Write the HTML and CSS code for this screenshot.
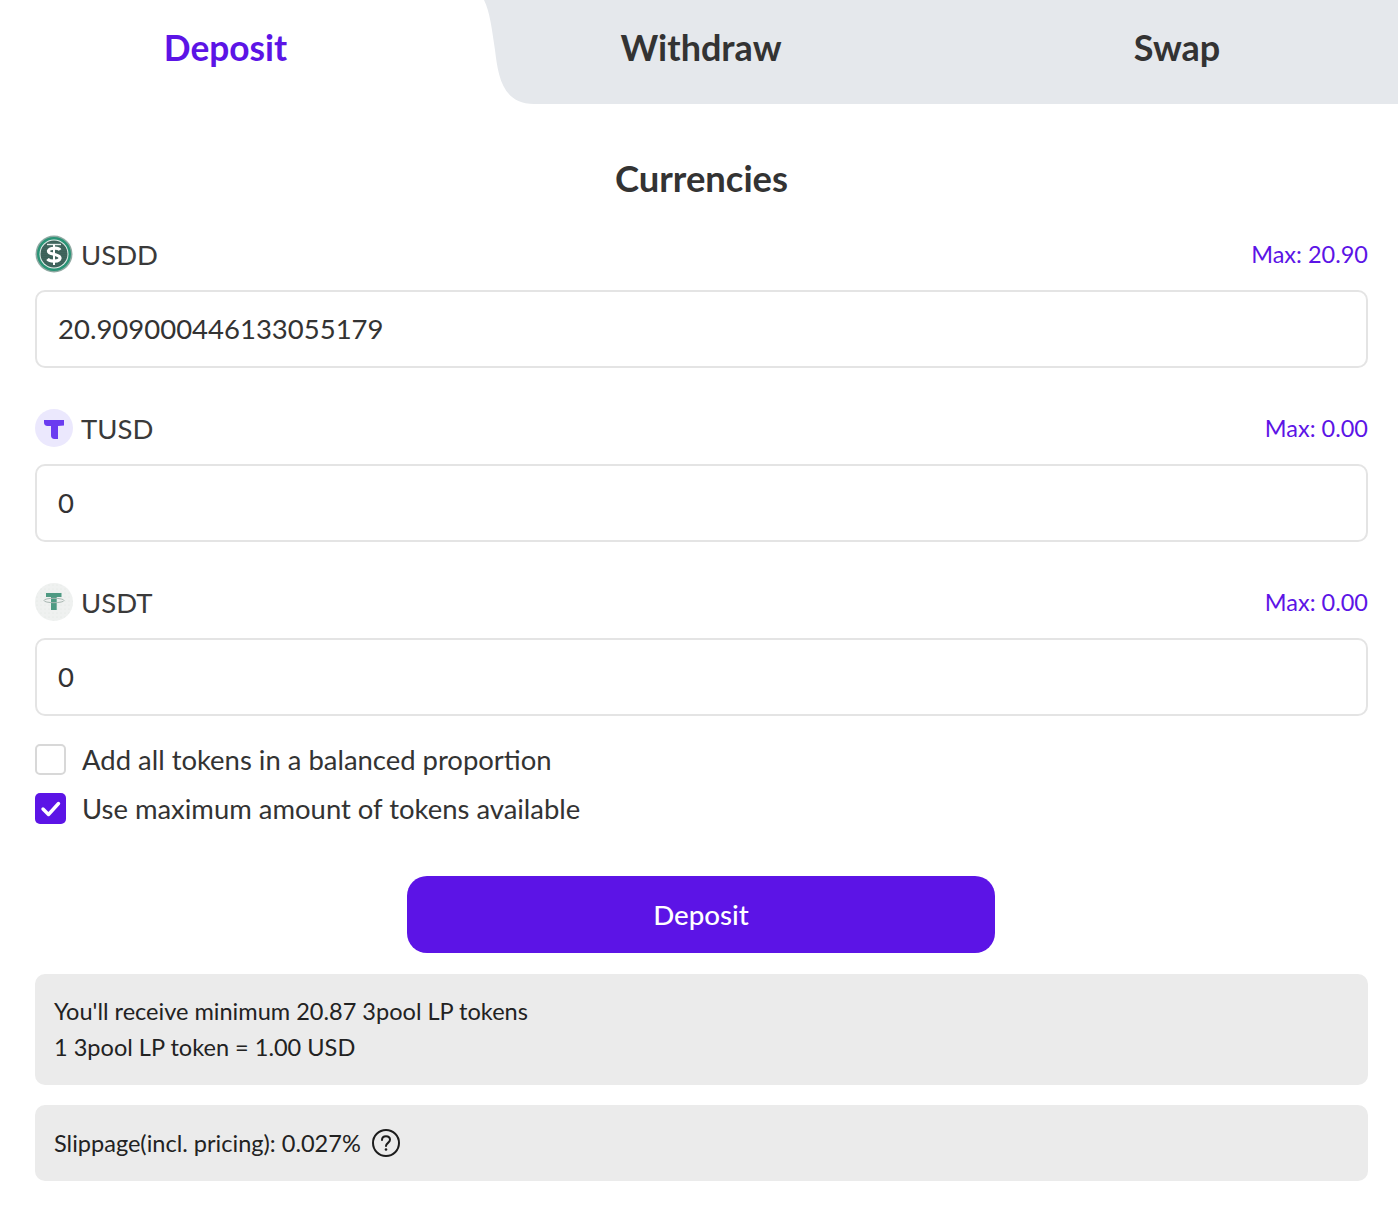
FILE: index.html
```html
<!DOCTYPE html>
<html lang="en">
<head>
<meta charset="utf-8">
<title>Deposit</title>
<link rel="stylesheet" href="styles.css">
</head>
<body>
<nav class="tabs">
  <div class="tab tab-active">Deposit</div>
  <div class="tab-rest">
    <svg class="tab-curve" viewBox="0 0 50 104" preserveAspectRatio="none" aria-hidden="true"><path d="M0 0C6 12 8 30 11 50C14 75 18 104 50 104L50 0Z" fill="#e5e8ec"/></svg>
    <div class="tab tab-withdraw">Withdraw</div>
    <div class="tab tab-swap">Swap</div>
  </div>
</nav>
<main class="content">
  <h2 class="title">Currencies</h2>

  <section class="field">
    <div class="field-head">
      <div class="coin">
        <svg class="coin-icon" viewBox="0 0 38 38" aria-hidden="true">
          <defs>
            <pattern id="usdd-dots" width="2" height="2" patternUnits="userSpaceOnUse">
              <rect width="2" height="2" fill="#33544e"/>
              <circle cx="1" cy="1" r="0.5" fill="#6fa596"/>
            </pattern>
          </defs>
          <circle cx="19" cy="19" r="18.500" fill="#8fa9a2"/>
          <circle cx="19" cy="19" r="17" fill="#2a9476"/>
          <circle cx="19" cy="19" r="14.500" fill="#e6efec"/>
          <circle cx="19" cy="19" r="13.500" fill="url(#usdd-dots)"/>
          <path d="M12 9.500H26" stroke="#e6efec" stroke-width="1.400"/>
          <path d="M25 15C23.500 12.500 14.500 12.500 13.500 15.800C12.500 20 25.500 18.500 25 23.300C24.500 27 15 27 12.500 24" fill="none" stroke="#fff" stroke-width="3.200"/>
          <path d="M19 9.500V30" stroke="#fff" stroke-width="2"/>
        </svg>
        <span class="coin-name">USDD</span>
      </div>
      <span class="max">Max: 20.90</span>
    </div>
    <div class="input">20.909000446133055179</div>
  </section>

  <section class="field">
    <div class="field-head">
      <div class="coin">
        <svg class="coin-icon" viewBox="0 0 38 38" aria-hidden="true">
          <circle cx="19" cy="19" r="19" fill="#ebe8fd"/>
          <path d="M9 11H29V16.500L23 17V30H19.500C17.300 30 16 28.700 16 26.500V17H12.500C10.300 17 9 15.500 9 13.500Z" fill="#6a3cf0"/>
        </svg>
        <span class="coin-name">TUSD</span>
      </div>
      <span class="max">Max: 0.00</span>
    </div>
    <div class="input">0</div>
  </section>

  <section class="field">
    <div class="field-head">
      <div class="coin">
        <svg class="coin-icon" viewBox="0 0 38 38" aria-hidden="true">
          <defs>
            <pattern id="usdt-dots" width="4" height="4" patternUnits="userSpaceOnUse">
              <rect width="4" height="4" fill="#eff1f0"/>
              <circle cx="2" cy="2" r="0.5" fill="#e0e4e2"/>
            </pattern>
          </defs>
          <circle cx="19" cy="19" r="19" fill="url(#usdt-dots)"/>
          <path d="M11 10H26.500V14H21.700V27H16V14H11Z" fill="#4f9a83"/>
          <ellipse cx="19" cy="17.500" rx="10" ry="2.200" fill="none" stroke="#aab8b3" stroke-width="1"/>
        </svg>
        <span class="coin-name">USDT</span>
      </div>
      <span class="max">Max: 0.00</span>
    </div>
    <div class="input">0</div>
  </section>

  <div class="checks">
    <div class="check-row">
      <span class="box"></span>
      <span class="check-label">Add all tokens in a balanced proportion</span>
    </div>
    <div class="check-row">
      <span class="box box-on">
        <svg class="tick" viewBox="0 0 31 31" aria-hidden="true"><path d="M8 16L13.500 21.500L23.500 10.500" fill="none" stroke="#fff" stroke-width="3.400" stroke-linecap="round" stroke-linejoin="round"/></svg>
      </span>
      <span class="check-label">Use maximum amount of tokens available</span>
    </div>
  </div>

  <button class="submit" type="button">Deposit</button>

  <div class="info info-receive">
    <div class="info-line">You'll receive minimum 20.87 3pool LP tokens</div>
    <div class="info-line">1 3pool LP token = 1.00 USD</div>
  </div>

  <div class="info info-slippage">
    <span>Slippage(incl. pricing): 0.027%</span>
    <svg class="help" viewBox="0 0 30 30" aria-hidden="true">
      <circle cx="15" cy="15" r="13" fill="none" stroke="#1c1c1c" stroke-width="2"/>
      <path d="M11 12C11 9.500 13 8.300 15 8.300C17.300 8.300 19 9.800 19 11.800C19 14.800 15 15 15 18" fill="none" stroke="#1c1c1c" stroke-width="2" stroke-linecap="round"/>
      <circle cx="15" cy="21.500" r="1.300" fill="#1c1c1c"/>
    </svg>
  </div>
</main>
</body>
</html>
```
FILE: styles.css
```css
* {
  box-sizing: border-box;
}

html, body {
  margin: 0;
  padding: 0;
}

body {
  background: #fff;
  color: #333;
  font-family: Lato, "Liberation Sans", sans-serif;
  min-height: 1232px;
}

.tabs {
  display: flex;
  height: 104px;
}

.tab {
  display: flex;
  align-items: center;
  justify-content: center;
  height: 94px;
  font-size: 36px;
  font-weight: 700;
  color: #333;
}

.tab-active {
  width: 451px;
  margin-right: 33px;
  font-size: 35.300px;
  color: #5c14e6;
}

.tab-rest {
  flex: 1;
  display: grid;
  grid-template-columns: 50px 384px 1fr;
  background: linear-gradient(#e5e8ec, #e5e8ec) no-repeat 50px 0 / 100% 100%;
}

.tab-curve {
  width: 50px;
  height: 104px;
  display: block;
}

.tab-withdraw {
  margin-left: -50px;
}

.tab-swap {
  padding-left: 38px;
}

.content {
  display: flex;
  flex-direction: column;
  padding: 0 30px 0 35px;
}

.title {
  margin: 53px 0 0;
  height: 42px;
  line-height: 42px;
  font-size: 36.400px;
  font-weight: 700;
  text-align: center;
  color: #333;
}

.field {
  margin-top: 36px;
}

.field + .field {
  margin-top: 41px;
}

.field-head {
  display: flex;
  align-items: center;
  justify-content: space-between;
  height: 38px;
  margin-bottom: 17px;
}

.coin {
  display: flex;
  align-items: center;
  gap: 8px;
}

.coin-icon {
  width: 38px;
  height: 38px;
  display: block;
}

.coin-name {
  font-size: 27.500px;
  color: #3a3a3a;
}

.max {
  font-size: 23.500px;
  color: #5c14e6;
}

.input {
  display: flex;
  align-items: center;
  height: 78px;
  padding: 0 0 2px 21px;
  border: 2px solid #e4e4e4;
  border-radius: 10px;
  font-size: 27.500px;
  color: #333;
}

.checks {
  display: flex;
  flex-direction: column;
  gap: 18px;
  margin-top: 28px;
}

.check-row {
  display: flex;
  align-items: center;
  gap: 16px;
  height: 31px;
}

.box {
  width: 31px;
  height: 31px;
  border: 2px solid #d8d8d8;
  border-radius: 5px;
  background: #fff;
}

.box-on {
  border: 0;
  background: #5c14e6;
}

.tick {
  width: 31px;
  height: 31px;
  display: block;
}

.check-label {
  font-size: 27.450px;
  color: #333;
}

.submit {
  align-self: center;
  width: 588px;
  height: 77px;
  margin-top: 52px;
  margin-right: 1px;
  border: 0;
  border-radius: 20px;
  background: #5c14e6;
  color: #fff;
  font-family: inherit;
  font-size: 27.700px;
  font-weight: 500;
}

.info {
  border-radius: 10px;
  background: #ebebeb;
  padding: 0 19px;
  font-size: 23.550px;
  color: #222;
}

.info-receive {
  display: flex;
  flex-direction: column;
  justify-content: center;
  height: 111px;
  margin-top: 21px;
  padding-bottom: 2px;
}

.info-line {
  line-height: 36px;
}

.info-slippage {
  display: flex;
  align-items: center;
  gap: 10px;
  height: 76px;
  margin-top: 20px;
}

.help {
  width: 30px;
  height: 30px;
  display: block;
}
```
